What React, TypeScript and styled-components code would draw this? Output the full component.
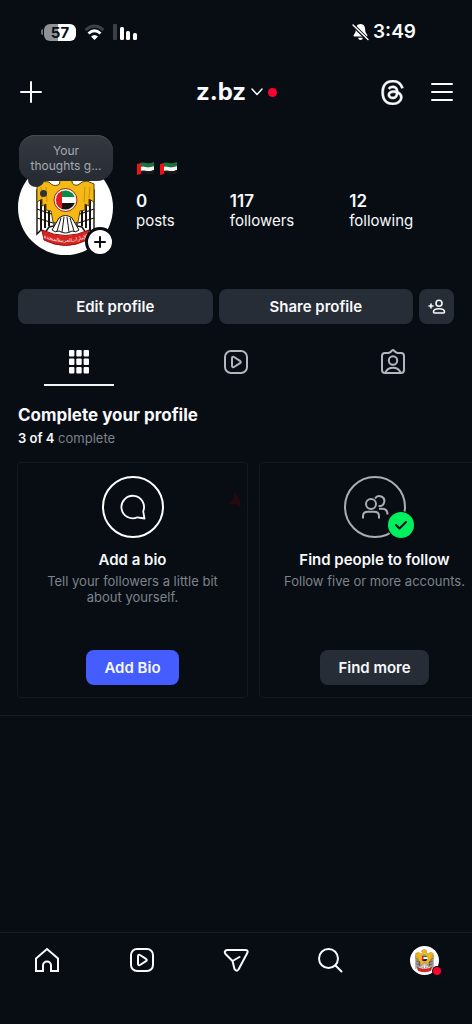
import React from "react";
import styled, { createGlobalStyle, css } from "styled-components";
import { BsThreads } from "react-icons/bs";

const GlobalStyle = createGlobalStyle`
  *, *::before, *::after { box-sizing: border-box; }
  body {
    margin: 0;
    background: #080d14;
    color: #f7f9fb;
    font-family: Inter, "Liberation Sans", sans-serif;
    -webkit-font-smoothing: antialiased;
  }
  button { font: inherit; color: inherit; border: 0; padding: 0; background: none; cursor: pointer; }
  a { color: inherit; text-decoration: none; }
  h1, h2, h3, p, dl, dt, dd { margin: 0; font-weight: inherit; font-size: inherit; }
  svg { display: block; flex: none; }
`;

const Screen = styled.div`
  display: flex;
  flex-direction: column;
  min-height: 100vh;
  overflow-x: hidden;
`;

const StatusBar = styled.div`
  display: flex;
  align-items: center;
  justify-content: space-between;
  height: 64px;
  padding: 0 56px 0 41px;
`;

const StatusGroup = styled.div<{ $gap: number }>`
  display: flex;
  align-items: center;
  gap: ${(p) => p.$gap}px;
`;

const Battery = styled.div`
  display: flex;
  align-items: center;
  gap: 1px;
  &::before {
    content: "";
    width: 2px;
    height: 6px;
    border-radius: 2px 0 0 2px;
    background: #6d7276;
  }
`;

const BatteryLevel = styled.span`
  width: 32px;
  height: 17px;
  border-radius: 6px;
  background: linear-gradient(90deg, #8c9295 43%, #fff 43%);
  color: #0a0e14;
  font-size: 15px;
  font-weight: 700;
  line-height: 17px;
  text-align: center;
`;

const Clock = styled.time`
  font-size: 19px;
  font-weight: 600;
  line-height: 24px;
`;

const Header = styled.header`
  display: grid;
  grid-template-columns: 1fr auto 1fr;
  align-items: center;
  height: 56px;
  padding: 0 18px 0 19px;
`;

const HeaderActions = styled.div`
  display: flex;
  align-items: center;
  justify-content: flex-end;
  gap: 25px;
`;

const IconButton = styled.button`
  display: grid;
  place-items: center;
  justify-self: start;
`;

const ThreadsIcon = styled(BsThreads)`
  stroke: currentColor;
  stroke-width: 0.3px;
`;

const AccountSwitcher = styled.button`
  display: flex;
  align-items: center;
  gap: 5px;
`;

const Username = styled.h1`
  font-size: 24px;
  font-weight: 700;
  line-height: 32px;
`;

const Dot = styled.span`
  width: 9px;
  height: 9px;
  border-radius: 50%;
  background: #ff0030;
`;

const Profile = styled.section`
  display: flex;
  gap: 23px;
  padding: 15px 18px 0;
`;

const AvatarBox = styled.div`
  position: relative;
  width: 95px;
  padding-top: 25px;
`;

const Note = styled.button`
  position: absolute;
  top: 0;
  left: 1px;
  width: 94px;
  height: 46px;
  border-radius: 16px;
  background: linear-gradient(#343940, #272c34);
  box-shadow: inset 0 1px 0 #464b52;
  color: #a5aab1;
  font-size: 12px;
  line-height: 15px;
  &::before {
    content: "";
    position: absolute;
    left: 9px;
    top: 38px;
    width: 16px;
    height: 14px;
    border-radius: 50%;
    background: #272c34;
  }
  &::after {
    content: "";
    position: absolute;
    left: 21px;
    top: 55px;
    width: 7px;
    height: 7px;
    border-radius: 50%;
    background: #30343a;
  }
`;

const NoteText = styled.span`
  position: relative;
  z-index: 1;
`;

const AddStory = styled.button`
  position: absolute;
  right: -2px;
  bottom: -2px;
  display: grid;
  place-items: center;
  width: 30px;
  height: 30px;
  border: 3px solid #080d14;
  border-radius: 50%;
  background: #fff;
`;

const ProfileInfo = styled.div`
  padding-top: 24px;
`;

const DisplayName = styled.div`
  display: flex;
  gap: 5px;
  height: 32px;
  padding-top: 3px;
`;

const Stats = styled.dl`
  display: flex;
  gap: 55px;
`;

const Stat = styled.div`
  display: flex;
  flex-direction: column-reverse;
`;

const StatValue = styled.dd`
  font-size: 17px;
  font-weight: 600;
  line-height: 20px;
`;

const StatLabel = styled.dt`
  font-size: 15px;
  line-height: 20px;
`;

const ProfileActions = styled.div`
  display: flex;
  gap: 6px;
  padding: 34px 18px 0;
`;

const Button = styled.button<{ $primary?: boolean; $kind?: "wide" | "icon" | "fit" }>`
  display: flex;
  align-items: center;
  justify-content: center;
  height: 35px;
  border-radius: 8px;
  background: ${(p) => (p.$primary ? "#455dff" : "#272d36")};
  font-size: 15px;
  font-weight: 600;
  line-height: 20px;
  ${(p) => p.$kind === "wide" && css`flex: 1;`}
  ${(p) => p.$kind === "icon" && css`width: 35px;`}
  ${(p) => p.$kind === "fit" && css`padding: 0 18px;`}
`;

const Tabs = styled.div`
  display: grid;
  grid-template-columns: repeat(3, 1fr);
`;

const Tab = styled.button`
  display: flex;
  justify-content: center;
  padding-top: 25px;
  height: 62px;
  color: #b1b7be;
  &[aria-selected="true"] {
    color: #fff;
  }
  &[aria-selected="true"]::after {
    content: "";
    align-self: flex-end;
    width: 70px;
    height: 2px;
    margin-left: -48px;
    margin-right: -22px;
    background: #f2f4f6;
  }
`;

const Completion = styled.section`
  padding: 18px 0 17px;
  border-bottom: 1px solid #151b21;
`;

const SectionTitle = styled.h2`
  padding: 0 18px;
  font-size: 17px;
  font-weight: 700;
  line-height: 22px;
  font-optical-sizing: none;
`;

const Progress = styled.p`
  padding: 3px 18px 0;
  color: #7d838a;
  font-size: 13px;
  line-height: 18px;
  strong { color: #f7f9fb; font-weight: 600; }
`;

const Carousel = styled.div`
  display: flex;
  gap: 11px;
  padding: 15px 18px 0 17px;
  overflow-x: auto;
  scrollbar-width: none;
`;

const Card = styled.article`
  position: relative;
  display: flex;
  flex: none;
  flex-direction: column;
  align-items: center;
  width: 231px;
  height: 236px;
  padding: 13px 18px 12px;
  border: 1px solid #13191e;
  border-radius: 4px;
  text-align: center;
`;

const CardIcon = styled.div<{ $done?: boolean }>`
  position: relative;
  display: grid;
  place-items: center;
  width: 62px;
  height: 62px;
  border: 2px solid ${(p) => (p.$done ? "#a9aeb4" : "#fff")};
  border-radius: 50%;
  color: ${(p) => (p.$done ? "#a9aeb4" : "#fff")};
`;

const DoneBadge = styled.span`
  position: absolute;
  right: -10px;
  bottom: -2px;
  display: grid;
  place-items: center;
  width: 26px;
  height: 26px;
  border-radius: 50%;
  background: #00ef5e;
  box-shadow: 0 0 0 1px #080d14;
`;

const CardTitle = styled.h3`
  margin-top: 12px;
  font-size: 15px;
  font-weight: 600;
  line-height: 20px;
`;

const CardText = styled.p`
  margin: 3px 0 auto;
  color: #7d838a;
  font-size: 13px;
  line-height: 16px;
`;

const Smudge = styled.svg`
  position: absolute;
  right: 5px;
  top: 28px;
`;

const NavBar = styled.nav`
  display: grid;
  grid-template-columns: repeat(5, 1fr);
  height: 92px;
  margin-top: auto;
  border-top: 1px solid #151b21;
`;

const NavLink = styled.a`
  display: grid;
  place-items: center;
  height: 54px;
`;

const NavAvatar = styled.span`
  position: relative;
  width: 29px;
  height: 29px;
`;

const NavDot = styled(Dot)`
  position: absolute;
  right: -2px;
  bottom: 0;
  width: 8px;
  height: 8px;
  box-shadow: 0 0 0 1px #080d14;
`;

const line = {
  fill: "none",
  stroke: "currentColor",
  strokeWidth: 2,
  strokeLinecap: "round",
  strokeLinejoin: "round",
} as const;

function Emblem({ size, id, motto }: { size: number; id: string; motto?: boolean }) {
  const feathers = [0, 1, 2];
  return (
    <svg width={size} height={size} viewBox="0 0 95 95" role="img" aria-label="Profile photo">
      <defs>
        <clipPath id={`${id}-flag`}>
          <circle cx="47.500" cy="40" r="9.600" />
        </clipPath>
      </defs>
      <circle cx="47.500" cy="47.500" r="47.500" fill="#fff" />
      <path d="M19 30V74L23 70L27 73L31 67L36 66V30Z" fill="#fff" stroke="#17130b" strokeWidth="1.400" />
      <path d="M76 30V74L72 70L68 73L64 67L59 66V30Z" fill="#fff" stroke="#17130b" strokeWidth="1.400" />
      <g stroke="#17130b" strokeWidth="2" fill="none">
        {feathers.map((i) => (
          <React.Fragment key={i}>
            <path d={`M${23 + i * 4} ${36 + i * 2}V${70 - i * 2}`} />
            <path d={`M${72 - i * 4} ${36 + i * 2}V${70 - i * 2}`} />
          </React.Fragment>
        ))}
        <path strokeWidth="1.200" d="M19 49L36 55M19 58L35 63M76 49L59 55M76 58L60 63" />
      </g>
      <path
        d="M19 24Q25 20 31 22Q35 27 40 25Q43 24 41 19L37 18L41 13Q49 9 54 15L54 22Q55 26 60 25Q64 21 69 21L76 24V42L71 39V46L67 44V50L62 51L60 62L54 64L47.500 59L41 64L35 62L33 51L28 50V44L24 46V39L19 42Z"
        fill="#f5b916"
        stroke="#5c4005"
        strokeWidth="1"
      />
      <path d="M23 27L24 38M28 27L29 42M72 27L71 38M67 27L66 42" stroke="#c78f0c" strokeWidth="1" fill="none" />
      <path d="M41 58Q47.500 53 54 58L61 70Q58 73 54 71Q47.500 75 41 71Q37 73 34 70Z" fill="#fff" stroke="#17130b" strokeWidth="1" />
      <path d="M43 58L39 71M46 57L44 72M49 57L51 72M52 58L56 71" stroke="#17130b" strokeWidth="1" fill="none" />
      <circle cx="47.500" cy="40" r="11.500" fill="#f7efe0" stroke="#9a2517" strokeWidth="1" />
      <g clipPath={`url(#${id}-flag)`}>
        <rect x="37" y="30" width="21" height="7" fill="#058c45" />
        <rect x="37" y="37" width="21" height="6" fill="#fff" />
        <rect x="37" y="43" width="21" height="8" fill="#15120f" />
        <rect x="37" y="30" width="7" height="21" fill="#e21b22" />
      </g>
      <path
        d="M24 70Q47.500 81 71 70L69 80Q47.500 91 26 80Z"
        fill="#d92420"
        stroke="#8e120e"
        strokeWidth="1"
      />
      {motto && (
        <g fontFamily="DejaVu Sans, sans-serif" fontSize="5" fill="#fff" textAnchor="middle">
          <text transform="translate(62 80) rotate(-16)">الإمارات</text>
          <text transform="translate(47 82)">العربية</text>
          <text transform="translate(33 80) rotate(16)">المتحدة</text>
        </g>
      )}
    </svg>
  );
}

function WavingFlag() {
  return (
    <svg width="18" height="13" viewBox="0 0 18 13" role="img" aria-label="United Arab Emirates flag">
      <path d="M4 1Q7 0 10 1T18 0V4Q14 6 11 5T4 6Z" fill="#17743f" />
      <path d="M4 5Q7 4 10 5T18 4V8Q14 10 11 9T4 10Z" fill="#f4f5f3" />
      <path d="M4 9Q7 8 10 9T18 8V11Q14 13 11 12T4 12Z" fill="#17191b" />
      <path d="M1 2L5 1V12L1 13Z" fill="#ee1115" />
    </svg>
  );
}

function ReelIcon() {
  return (
    <svg width="26" height="26" viewBox="0 0 26 26" {...line}>
      <rect x="2" y="2" width="22" height="22" rx="6" />
      <path d="M9 9.200c0-1.200 1-1.800 2-1.200l6 3.800c1 .600 1 1.800 0 2.400l-6 3.800c-1 .600-2 0-2-1.200z" />
    </svg>
  );
}

export default function App() {
  return (
    <Screen>
      <GlobalStyle />
      <StatusBar>
        <StatusGroup $gap={8}>
          <Battery>
            <BatteryLevel>57</BatteryLevel>
          </Battery>
          <svg width="21" height="17" viewBox="0 0 21 17" fill="none" aria-label="Wi-Fi">
            <path d="M1.500 6Q10.500 -2 19.500 6" stroke="#3b4046" strokeWidth="3" />
            <path d="M4.500 9.500Q10.500 4 16.500 9.500" stroke="#fff" strokeWidth="2.800" />
            <path d="M7 12.500Q10.500 9.500 14 12.500L10.500 16Z" fill="#fff" />
          </svg>
          <svg width="24" height="16" viewBox="0 0 24 16" fill="#fff" aria-label="Signal">
            <rect width="4" height="16" rx="1" fill="#3b4046" />
            <rect x="7" y="3" width="4" height="13" rx="1.500" />
            <rect x="13" y="7" width="4" height="9" rx="1.500" />
            <rect x="20" y="9" width="4" height="7" rx="1.500" />
          </svg>
        </StatusGroup>
        <StatusGroup $gap={4}>
          <svg width="17" height="18" viewBox="0 0 17 18" aria-label="Silent mode">
            <path d="M8.500 1C5 1 3.800 4 3.800 7C3.800 10 2 11 1.500 12.500Q1.500 13.500 2.500 13.500H14.500Q15.500 13.500 15.500 12.500C15 11 13.200 10 13.200 7C13.200 4 12 1 8.500 1Z" fill="#fff" />
            <path d="M6 14.700H11Q10.500 17 8.500 17T6 14.700Z" fill="#fff" />
            <path d="M0.500 1.500L16 17" stroke="#080d14" strokeWidth="3.600" />
            <path d="M1 2L16 16.500" stroke="#fff" strokeWidth="1.400" strokeLinecap="round" />
          </svg>
          <Clock>3:49</Clock>
        </StatusGroup>
      </StatusBar>

      <Header>
        <IconButton aria-label="Create">
          <svg width="24" height="24" viewBox="0 0 24 24" {...line}>
            <path d="M2 12H22M12 2V22" />
          </svg>
        </IconButton>
        <AccountSwitcher>
          <Username>z.bz</Username>
          <svg width="12" height="8" viewBox="0 0 12 8" {...line} strokeWidth="1.500">
            <path d="M1 1L6 6.500L11 1" />
          </svg>
          <Dot />
        </AccountSwitcher>
        <HeaderActions>
          <IconButton aria-label="Threads">
            <ThreadsIcon size={25} />
          </IconButton>
          <IconButton aria-label="Menu">
            <svg width="24" height="20" viewBox="0 0 24 20" {...line}>
              <path d="M2 2H22M2 10H22M2 18H22" />
            </svg>
          </IconButton>
        </HeaderActions>
      </Header>

      <main>
        <Profile>
          <AvatarBox>
            <Emblem size={95} id="profile" motto />
            <Note>
              <NoteText>
                Your
                <br />
                thoughts g...
              </NoteText>
            </Note>
            <AddStory aria-label="Add to story">
              <svg width="14" height="14" viewBox="0 0 14 14" {...line} stroke="#080d14">
                <path d="M2 7H12M7 2V12" />
              </svg>
            </AddStory>
          </AvatarBox>
          <ProfileInfo>
            <DisplayName>
              <WavingFlag />
              <WavingFlag />
            </DisplayName>
            <Stats>
              <Stat>
                <StatLabel>posts</StatLabel>
                <StatValue>0</StatValue>
              </Stat>
              <Stat>
                <StatLabel>followers</StatLabel>
                <StatValue>117</StatValue>
              </Stat>
              <Stat>
                <StatLabel>following</StatLabel>
                <StatValue>12</StatValue>
              </Stat>
            </Stats>
          </ProfileInfo>
        </Profile>

        <ProfileActions>
          <Button $kind="wide">Edit profile</Button>
          <Button $kind="wide">Share profile</Button>
          <Button $kind="icon" aria-label="Discover people">
            <svg width="18" height="16" viewBox="0 0 18 16" {...line} strokeWidth="1.600">
              <circle cx="11" cy="4.200" r="3" />
              <path d="M5.500 13C5.500 10.800 8 9.800 11 9.800S16.500 10.800 16.500 13Q16.500 14 15.500 14H6.500Q5.500 14 5.500 13ZM1 7H5M3 5V9" />
            </svg>
          </Button>
        </ProfileActions>

        <Tabs role="tablist">
          <Tab role="tab" aria-selected="true" aria-label="Posts">
            <svg width="26" height="26" viewBox="0 0 26 26" fill="currentColor">
              {[3, 10.3, 17.6].map((x) =>
                [1, 9.5, 18].map((y) => (
                  <rect key={`${x}-${y}`} x={x} y={y} width="5.400" height="6.600" rx="1" />
                ))
              )}
            </svg>
          </Tab>
          <Tab role="tab" aria-selected="false" aria-label="Reels">
            <ReelIcon />
          </Tab>
          <Tab role="tab" aria-selected="false" aria-label="Tagged">
            <svg width="26" height="26" viewBox="0 0 26 26" {...line}>
              <path d="M5 4H8Q9.500 4 10.500 3L12 1.500Q13 .700 14 1.500L15.500 3Q16.500 4 18 4H21Q24 4 24 7V21Q24 24 21 24H5Q2 24 2 21V7Q2 4 5 4Z" />
              <circle cx="13" cy="11.500" r="4.200" />
              <path d="M5.500 23.500C7 20 10 18.800 13 18.800S19 20 20.500 23.500" />
            </svg>
          </Tab>
        </Tabs>

        <Completion>
          <SectionTitle>Complete your profile</SectionTitle>
          <Progress>
            <strong>3 of 4</strong> complete
          </Progress>
          <Carousel>
            <Card>
              <Smudge width="14" height="18" viewBox="0 0 14 18" aria-hidden="true">
                <path d="M7 1L12 10L13 17L8 13L1 13L5 8Z" fill="#26090f" />
              </Smudge>
              <CardIcon>
                <svg width="26" height="26" viewBox="0 0 26 26" {...line} strokeWidth="1.800">
                  <path d="M23.200 17.300A11.300 11.300 0 1 0 17.500 23.300L24.500 24.500Z" />
                </svg>
              </CardIcon>
              <CardTitle>Add a bio</CardTitle>
              <CardText>Tell your followers a little bit about yourself.</CardText>
              <Button $kind="fit" $primary>
                Add Bio
              </Button>
            </Card>
            <Card>
              <CardIcon $done>
                <svg width="28" height="26" viewBox="0 0 28 26" {...line} strokeLinecap="butt">
                  <circle cx="10" cy="10" r="5" />
                  <path d="M2 24.500V22Q2 17.800 7 17.800H13Q18 17.800 18 22V24.500M14 4.500A5 5 0 1 1 17.500 12M18 14.800H21Q26.500 14.800 26.500 20.500" />
                </svg>
                <DoneBadge>
                  <svg width="14" height="10" viewBox="0 0 14 10" {...line} stroke="#080d14">
                    <path d="M2 5L5.500 8.500L12 2" />
                  </svg>
                </DoneBadge>
              </CardIcon>
              <CardTitle>Find people to follow</CardTitle>
              <CardText>Follow five or more accounts.</CardText>
              <Button $kind="fit">Find more</Button>
            </Card>
          </Carousel>
        </Completion>
      </main>

      <NavBar>
        <NavLink href="#home" aria-label="Home">
          <svg width="26" height="26" viewBox="0 0 26 26" {...line} strokeLinejoin="miter">
            <path d="M2 11.500L13 2L24 11.500V24H17V18.500A4 4 0 0 0 9 18.500V24H2Z" />
          </svg>
        </NavLink>
        <NavLink href="#reels" aria-label="Reels">
          <ReelIcon />
        </NavLink>
        <NavLink href="#messages" aria-label="Messages">
          <svg width="26" height="26" viewBox="0 0 26 26" {...line}>
            <path d="M4 3H22Q26 3 24 6.500L15.500 22.500Q13.500 25 11.500 22L9.500 14L2.500 7Q.500 4 4 3ZM9.500 14L16.500 10" />
          </svg>
        </NavLink>
        <NavLink href="#search" aria-label="Search">
          <svg width="26" height="26" viewBox="0 0 26 26" {...line}>
            <circle cx="11.500" cy="11.500" r="9.500" />
            <path d="M18.500 18.500L24.500 24.500" />
          </svg>
        </NavLink>
        <NavLink href="#profile" aria-label="Profile">
          <NavAvatar>
            <Emblem size={29} id="nav" />
            <NavDot />
          </NavAvatar>
        </NavLink>
      </NavBar>
    </Screen>
  );
}
